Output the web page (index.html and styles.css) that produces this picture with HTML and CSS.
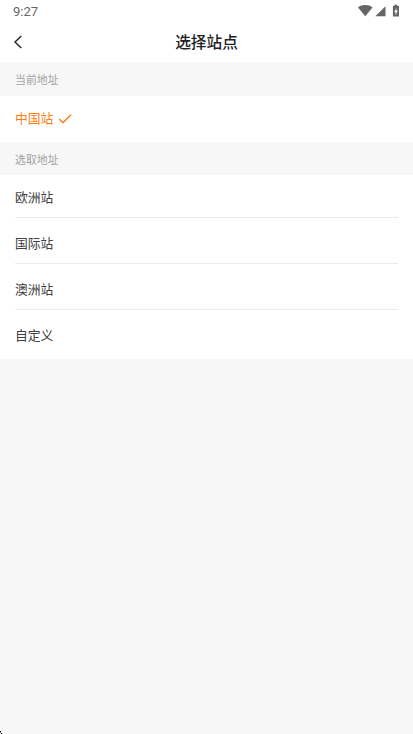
FILE: index.html
```
<!DOCTYPE html>
<html lang="zh-CN">
<head>
<meta charset="utf-8">
<title>选择站点</title>
<link rel="stylesheet" href="styles.css">
</head>
<body>
<div class="status">
  <span class="time">9:27</span>
  <svg class="status-icons" width="44" height="14" viewBox="0 0 44 14" fill="#666">
    <path d="M0 3.500C4 .3 10.500 .3 14.500 3.500L7.300 12.300Z"/>
    <path d="M27.500 2.200V12.300H17.300Z"/>
    <path fill-rule="evenodd" d="M36.500 .8H39V1.800H40.400Q41 1.800 41 2.400V12Q41 12.600 40.400 12.600H35.500Q34.900 12.600 34.900 12V2.400Q34.900 1.800 35.500 1.800H36.500ZM38.500 4L36.300 8H37.500V11L39.800 6.800H38.500Z"/>
  </svg>
</div>
<header class="nav">
  <svg class="back" width="10" height="14" viewBox="0 0 10 14"><path d="M8.300 1L2 7L8.300 13"/></svg>
  <h1>选择站点</h1>
</header>
<h2 class="label current-label">当前地址</h2>
<div class="current">
  <span>中国站</span>
  <svg class="check" width="14" height="10" viewBox="0 0 14 10"><path d="M1.200 5L5 8.800L13 .8"/></svg>
</div>
<h2 class="label">选取地址</h2>
<ul class="sites">
  <li>欧洲站</li>
  <li>国际站</li>
  <li>澳洲站</li>
  <li>自定义</li>
</ul>
<svg class="corner" width="2" height="3" viewBox="0 0 2 3" shape-rendering="crispEdges"><path d="M0 0H1V1H0ZM1 2H2V3H1Z"/><path d="M0 1H1V2H0Z" fill="#777"/></svg>
</body>
</html>
```
FILE: styles.css
```
* { box-sizing: border-box; }
body {
  margin: 0;
  min-height: 734px;
  background: #f7f7f7;
  color: #404040;
  font-family: "Noto Sans CJK SC", sans-serif;
  font-size: 12.8px;
}
.status {
  display: flex;
  justify-content: space-between;
  height: 22px;
  padding: 4px 11px 0 13px;
  background: #fff;
}
.time {
  font: 13px/16px Roboto, sans-serif;
  color: #666;
}
.nav {
  display: grid;
  grid-template-columns: 30px 1fr 30px;
  align-items: center;
  height: 40px;
  background: #fff;
}
.back { margin-left: 13px; }
.back path {
  fill: none;
  stroke: #222;
  stroke-width: 1.4;
}
h1 {
  margin: 0;
  text-align: center;
  font-size: 15.7px;
  font-weight: 500;
  line-height: 40px;
  color: #222;
}
.label {
  margin: 0;
  height: 33px;
  padding-left: 15px;
  font-size: 10.9px;
  font-weight: 400;
  line-height: 34px;
  color: #a3a3a3;
}
.current-label { height: 34px; }
.current {
  display: flex;
  align-items: center;
  gap: 5px;
  height: 46px;
  padding: 0 0 1px 15px;
  background: #fff;
  color: #ff7d12;
}
.current span { line-height: 18px; padding-bottom: 2px; }
.check path {
  fill: none;
  stroke: #ff7d12;
  stroke-width: 1.4;
}
.sites {
  margin: 0;
  padding: 0 15px;
  height: 184px;
  list-style: none;
  background: #fff;
}
.sites li {
  height: 46px;
  line-height: 49px;
  border-bottom: 1px solid #ebebeb;
}
.sites li:first-child { height: 43px; line-height: 43px; }
.sites li:last-child { border: 0; }
.corner {
  position: absolute;
  left: 0;
  bottom: 0;
}
```
